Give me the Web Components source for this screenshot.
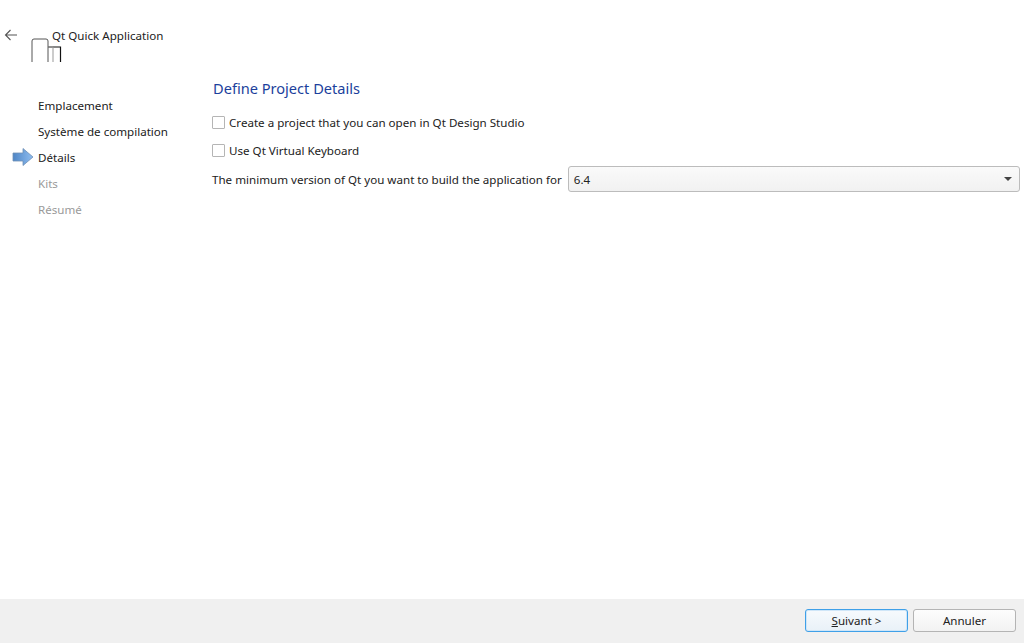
<!DOCTYPE html>
<html>
<head>
<meta charset="utf-8">
<title>Qt Quick Application</title>
<style>
html,body{margin:0;height:100%;background:#fff;}
body{font:12px "Noto Sans","Open Sans",sans-serif;color:#1a1a1a;}
</style>
</head>
<body>
<wizard-page>
  <wizard-header slot="header">Qt Quick Application</wizard-header>
  <wizard-steps slot="steps">
    <wizard-step>Emplacement</wizard-step>
    <wizard-step>Système de compilation</wizard-step>
    <wizard-step current>Détails</wizard-step>
    <wizard-step off>Kits</wizard-step>
    <wizard-step off>Résumé</wizard-step>
  </wizard-steps>
  <details-form slot="content"></details-form>
  <wizard-footer slot="footer">
    <wizard-button focused><u>S</u>uivant &gt;</wizard-button>
    <wizard-button>Annuler</wizard-button>
  </wizard-footer>
</wizard-page>
<script>
class WizardPage extends HTMLElement{
    constructor(){
        super();
        this.attachShadow({mode:'open'}).innerHTML = `
            <style>
                :host{display:flex;flex-direction:column;height:643px;overflow:hidden;}
                .body{flex:1;display:flex;min-height:0;}
                .side{width:212px;flex:none;}
            </style>
            <slot name="header"></slot>
            <div class="body">
                <div class="side"><slot name="steps"></slot></div>
                <slot name="content"></slot>
            </div>
            <slot name="footer"></slot>
        `;
    }
}
class WizardHeader extends HTMLElement{
    constructor(){
        super();
        this.attachShadow({mode:'open'}).innerHTML = `
            <style>
                :host{display:flex;align-items:center;height:92px;padding:0 0 2px 4px;box-sizing:border-box;position:relative;}
                .inner{display:flex;align-items:center;height:36px;margin-bottom:20px;}
                .back{width:14px;height:14px;flex:none;}
                .title{margin-left:34px;font-size:11.6px;white-space:nowrap;color:#222;}
                .logo{position:absolute;left:31px;top:38px;width:32px;height:24px;}
            </style>
            <div class="inner">
                <svg class="back" viewBox="0 0 14 14" fill="none" stroke="#555" stroke-width="1.1"><path d="M13 7H1.5M6.5 2 1.5 7l5 5"/></svg>
                <span class="title"><slot></slot></span>
            </div>
            <svg class="logo" viewBox="0 0 32 24" fill="none">
                <path d="M1 24V3q0-2 2-2h12q2 0 2 2v21" stroke="#555" stroke-width="1"/>
                <path d="M17 9h12.500V24" stroke="#111" stroke-width="1.200"/>
                <path d="M17 9h5V24" stroke="#999" stroke-width="1"/>
            </svg>
        `;
    }
}
class WizardSteps extends HTMLElement{
    constructor(){
        super();
        this.attachShadow({mode:'open'}).innerHTML = `
            <style>:host{display:flex;flex-direction:column;}</style>
            <slot></slot>
        `;
    }
}
class WizardStep extends HTMLElement{
    constructor(){
        super();
        this.attachShadow({mode:'open'}).innerHTML = `
            <style>
                :host{display:flex;align-items:center;height:26px;padding-left:38px;font-size:11.6px;position:relative;white-space:nowrap;color:#222;}
                :host([off]){color:#9a9a9a;}
                svg{display:none;position:absolute;left:12px;top:3px;width:22px;height:20px;}
                :host([current]) svg{display:block;}
            </style>
            <svg viewBox="0 0 22 20">
                <defs><linearGradient id="g" x1="0" x2="1" y1="0" y2="0"><stop offset="0" stop-color="#4f86c6"/><stop offset="1" stop-color="#8fbdf0"/></linearGradient></defs>
                <path d="M1 6h10V1.500L21 10l-10 8.500V14H1z" fill="url(#g)" stroke="#6f8fb5" stroke-width=".8"/>
            </svg>
            <slot></slot>
        `;
    }
}
class WizardCheck extends HTMLElement{
    constructor(){
        super();
        this.attachShadow({mode:'open'}).innerHTML = `
            <style>
                :host{display:flex;align-items:center;gap:4px;height:16px;font-size:11.6px;white-space:nowrap;color:#222;}
                i{width:11px;height:11px;border:1px solid #b5b5b5;border-radius:1px;background:#fff;flex:none;}
            </style>
            <i></i><slot></slot>
        `;
    }
}
class VersionCombo extends HTMLElement{
    constructor(){
        super();
        this.attachShadow({mode:'open'}).innerHTML = `
            <style>
                :host{display:flex;align-items:center;justify-content:space-between;flex:1;height:26px;box-sizing:border-box;
                    border:1px solid #bcbcbc;border-radius:3px;background:linear-gradient(#fafafa,#f1f1f1);
                    padding:0 7px 0 5px;font-size:11.6px;color:#222;}
                b{width:0;height:0;border:4px solid transparent;border-top:4px solid #444;border-bottom:0;border-left-width:4.5px;border-right-width:4.5px;}
            </style>
            <slot></slot><b></b>
        `;
    }
}
class DetailsForm extends HTMLElement{
    constructor(){
        super();
        this.attachShadow({mode:'open'}).innerHTML = `
            <style>
                :host{display:flex;flex-direction:column;flex:1;padding-right:4px;min-width:0;}
                h2{margin:-16px 0 0 1px;font-weight:400;font-size:14.6px;line-height:24px;color:#1c3f9c;}
                wizard-check{margin-top:14px;}
                wizard-check + wizard-check{margin-top:12px;}
                .row{display:flex;align-items:center;gap:6px;margin-top:8px;font-size:11.6px;white-space:nowrap;color:#222;}
            </style>
            <h2>Define Project Details</h2>
            <wizard-check>Create a project that you can open in Qt Design Studio</wizard-check>
            <wizard-check>Use Qt Virtual Keyboard</wizard-check>
            <div class="row"><span>The minimum version of Qt you want to build the application for</span><version-combo>6.4</version-combo></div>
        `;
    }
}
class WizardFooter extends HTMLElement{
    constructor(){
        super();
        this.attachShadow({mode:'open'}).innerHTML = `
            <style>:host{display:flex;justify-content:flex-end;align-items:center;gap:5px;height:44px;background:#f0f0f0;padding:0 8px 1px 0;box-sizing:border-box;}</style>
            <slot></slot>
        `;
    }
}
class WizardButton extends HTMLElement{
    constructor(){
        super();
        this.attachShadow({mode:'open'}).innerHTML = `
            <style>
                :host{display:flex;align-items:center;justify-content:center;width:103px;height:23px;box-sizing:border-box;
                    border:1px solid #b4b4b4;border-radius:3px;background:linear-gradient(#fdfdfd,#f2f2f2);font-size:11.6px;color:#222;}
                :host([focused]){border-color:#3fa0e8;box-shadow:inset 0 0 0 1px #cfe6f8;background:linear-gradient(#f6fafd,#e9f1f8);}
            </style>
            <slot></slot>
        `;
    }
}
customElements.define('wizard-page',WizardPage);
customElements.define('wizard-header',WizardHeader);
customElements.define('wizard-steps',WizardSteps);
customElements.define('wizard-step',WizardStep);
customElements.define('wizard-check',WizardCheck);
customElements.define('version-combo',VersionCombo);
customElements.define('details-form',DetailsForm);
customElements.define('wizard-footer',WizardFooter);
customElements.define('wizard-button',WizardButton);
</script>
</body>
</html>
